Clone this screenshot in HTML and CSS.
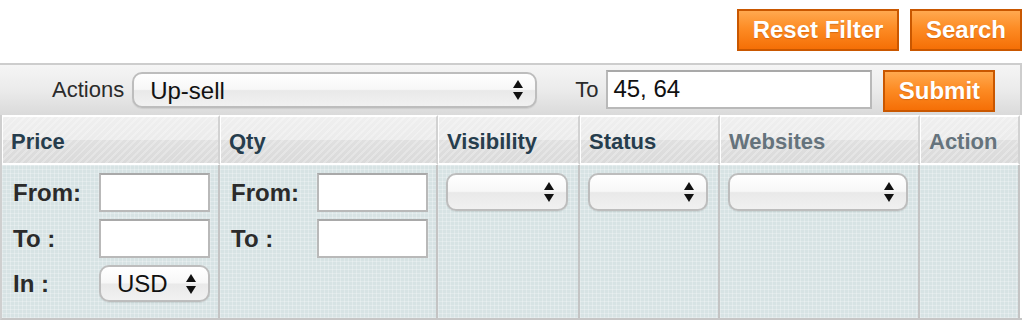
FILE: index.html
```html
<!DOCTYPE html>
<html lang="en">
<head>
    <meta charset="UTF-8">
    <meta name="viewport" content="width=device-width, initial-scale=1.0">
    <title>Product Grid</title>
    <link rel="stylesheet" href="styles.css">
</head>
<body>
    <div class="page">
        <div class="top-buttons">
            <button class="btn btn-reset">Reset Filter</button>
            <button class="btn btn-search">Search</button>
        </div>

        <div class="massaction">
            <label class="ma-label" for="ma-action">Actions</label>
            <span class="sel sel-action">
                <select id="ma-action"><option>Up-sell</option><option>Cross-sell</option><option>Related</option></select>
                <svg class="arrows" width="10" height="20" viewBox="0 0 10 20"><polygon points="0,8 5,0 10,8"/><polygon points="0,12 10,12 5,20"/></svg>
            </span>
            <label class="ma-label ma-to" for="ma-ids">To</label>
            <input id="ma-ids" class="text text-ids" type="text" value="45, 64">
            <button class="btn btn-submit">Submit</button>
        </div>

        <div class="grid">
            <div class="th">Price</div>
            <div class="th">Qty</div>
            <div class="th">Visibility</div>
            <div class="th">Status</div>
            <div class="th th-off">Websites</div>
            <div class="th th-off">Action</div>

            <div class="td">
                <div class="range">
                    <span class="lbl">From:</span>
                    <input class="text" type="text">
                    <span class="lbl">To :</span>
                    <input class="text" type="text">
                    <span class="lbl">In :</span>
                    <span class="sel sel-cur">
                        <select><option>USD</option></select>
                        <svg class="arrows" width="10" height="20" viewBox="0 0 10 20"><polygon points="0,8 5,0 10,8"/><polygon points="0,12 10,12 5,20"/></svg>
                    </span>
                </div>
            </div>
            <div class="td">
                <div class="range">
                    <span class="lbl">From:</span>
                    <input class="text" type="text">
                    <span class="lbl">To :</span>
                    <input class="text" type="text">
                </div>
            </div>
            <div class="td">
                <span class="sel sel-full">
                    <select><option></option><option>Catalog, Search</option></select>
                    <svg class="arrows" width="10" height="20" viewBox="0 0 10 20"><polygon points="0,8 5,0 10,8"/><polygon points="0,12 10,12 5,20"/></svg>
                </span>
            </div>
            <div class="td">
                <span class="sel sel-full">
                    <select><option></option><option>Enabled</option><option>Disabled</option></select>
                    <svg class="arrows" width="10" height="20" viewBox="0 0 10 20"><polygon points="0,8 5,0 10,8"/><polygon points="0,12 10,12 5,20"/></svg>
                </span>
            </div>
            <div class="td">
                <span class="sel sel-full">
                    <select><option></option><option>Main Website</option></select>
                    <svg class="arrows" width="10" height="20" viewBox="0 0 10 20"><polygon points="0,8 5,0 10,8"/><polygon points="0,12 10,12 5,20"/></svg>
                </span>
            </div>
            <div class="td"></div>
        </div>
    </div>
</body>
</html>
```

FILE: styles.css
```css
body {
    margin: 0;
    background-color: #fff;
    font-family: "Liberation Sans", Arial, Helvetica, sans-serif;
    color: #2b2b2b;
}
.page {
    width: 1022px;
}
.top-buttons {
    display: flex;
    justify-content: flex-end;
    gap: 11px;
    padding-top: 9px;
}
.btn {
    height: 42px;
    padding: 0 13px;
    border: 2px solid #c95700;
    background: linear-gradient(#ffa94f 0%, #fd8c25 45%, #f56f06 100%);
    color: #fff;
    font-family: "Liberation Sans", Arial, sans-serif;
    font-weight: bold;
    font-size: 24px;
    text-shadow: 0 1px 1px rgba(150, 60, 0, 0.35);
    cursor: pointer;
}
.btn-reset {
    width: 162px;
}
.btn-search {
    width: 112px;
}
.massaction {
    display: flex;
    align-items: center;
    height: 50px;
    margin-top: 12px;
    padding-left: 52px;
    border-top: 2px solid #cdcdcd;
    border-right: 2px solid #cdcdcd;
    background: linear-gradient(#f5f5f5 0%, #ebebeb 50%, #dadada 100%);
}
.ma-label {
    font-size: 22px;
    color: #2b2b2b;
    margin-right: 8px;
}
.ma-to {
    margin-left: 38px;
}
.text {
    box-sizing: border-box;
    height: 39px;
    padding: 0 5px;
    border: 2px solid #b9b9b9;
    border-top-color: #a9a9a9;
    background: #fff;
    font-family: "Liberation Sans", Arial, sans-serif;
    font-size: 24px;
    color: #111;
}
.text-ids {
    width: 266px;
    margin-top: -2px;
}
.btn-submit {
    width: 112px;
    margin-left: 11px;
    margin-top: 2px;
}
.sel {
    position: relative;
    display: inline-block;
}
.sel select {
    box-sizing: border-box;
    width: 100%;
    height: 100%;
    appearance: none;
    -webkit-appearance: none;
    padding: 0 30px 0 16px;
    border: 2px solid #bdbdbd;
    border-radius: 10px;
    background: linear-gradient(#ffffff 0%, #f7f7f7 48%, #e9e9e9 52%, #f1f1f1 100%);
    box-shadow: 0 1px 1px rgba(0, 0, 0, 0.08);
    font-family: "Liberation Sans", Arial, sans-serif;
    font-size: 24px;
    color: #111;
}
.sel .arrows {
    position: absolute;
    right: 14px;
    top: 50%;
    margin-top: -10px;
    fill: #111;
    pointer-events: none;
}
.sel-action {
    width: 405px;
    height: 36px;
}
.sel-cur {
    width: 111px;
    height: 37px;
}
.sel-full {
    display: block;
    height: 38px;
}
.grid {
    display: grid;
    grid-template-columns: 218px 218px 142px 140px 200px 100px;
    border-left: 2px solid #cfcfcf;
    border-bottom: 2px solid #c6c6c6;
}
.th {
    height: 43px;
    padding: 3px 0 0 9px;
    border-top: 2px solid #fff;
    border-bottom: 2px solid #fff;
    border-right: 2px solid #d2d2d2;
    box-shadow: inset 1px 0 0 #fff;
    background:
        repeating-linear-gradient(135deg, rgba(255, 255, 255, 0.25) 0 2px, rgba(255, 255, 255, 0) 2px 5px),
        linear-gradient(#efefef 0%, #ebebeb 50%, #e0e0e0 50%, #dadada 100%);
    font-size: 22px;
    font-weight: bold;
    line-height: 43px;
    color: #263d4d;
}
.th-off {
    color: #65737c;
}
.td {
    height: 145px;
    padding: 8px 10px 0 8px;
    border-right: 2px solid #c4c4c4;
    background-color: #d7e3e4;
    background-image:
        linear-gradient(90deg, rgba(255, 255, 255, 0.25) 1px, transparent 1px),
        linear-gradient(rgba(255, 255, 255, 0.25) 1px, transparent 1px);
    background-size: 4px 4px;
}
.range {
    display: grid;
    grid-template-columns: 86px 111px;
    row-gap: 7px;
    align-items: center;
    padding-left: 3px;
}
.range .text {
    width: 111px;
}
.lbl {
    font-size: 24px;
    font-weight: bold;
    color: #2b2b2b;
}
```
